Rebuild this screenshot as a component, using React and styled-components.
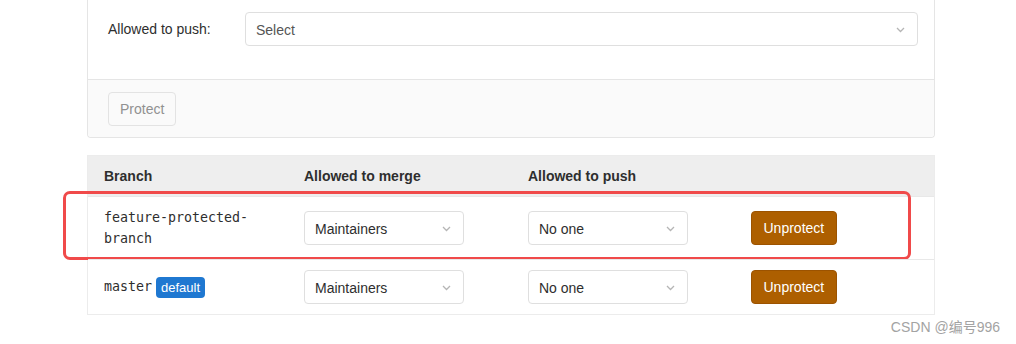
import React from "react";
import styled, { createGlobalStyle } from "styled-components";

const GlobalStyle = createGlobalStyle`
  html, body {
    margin: 0;
    padding: 0;
    background: #ffffff;
  }
  body {
    font-family: "Liberation Sans", Arial, sans-serif;
    font-size: 14px;
    color: #2e2e2e;
  }
`;

const ROWS = [
  { branch: "feature-protected-\nbranch", merge: "Maintainers", push: "No one", highlighted: true },
  { branch: "master", isDefault: true, merge: "Maintainers", push: "No one" },
];

const Page = styled.div`
  position: relative;
  box-sizing: border-box;
  width: 1016px;
  height: 344px;
  padding: 0 81px 0 87px;
  overflow: hidden;
`;

const Card = styled.div`
  border: 1px solid #e5e5e5;
  border-top: none;
  border-radius: 0 0 4px 4px;
`;

const FormRow = styled.div`
  display: flex;
  align-items: center;
  padding: 12px 16px 33px 20px;
`;

const Label = styled.label`
  width: 137px;
  flex-shrink: 0;
  font-size: 14px;
  color: #2e2e2e;
`;

const Footer = styled.div`
  border-top: 1px solid #e5e5e5;
  background: #fafafa;
  padding: 12px 20px 11px;
  border-radius: 0 0 4px 4px;
`;

const Button = styled.button`
  display: block;
  height: 34px;
  padding: 0 ${(p) => (p.$warning ? "11.5px" : "11px")};
  font-family: inherit;
  font-size: 14px;
  border-radius: 4px;
  cursor: pointer;
  border: 1px solid ${(p) => (p.$warning ? "#9c5300" : "#e3e3e3")};
  background: ${(p) => (p.$warning ? "#ad5f00" : "#fafafa")};
  color: ${(p) => (p.$warning ? "#ffffff" : "#919191")};
`;

const SelectBox = styled.div`
  display: flex;
  align-items: center;
  justify-content: space-between;
  box-sizing: border-box;
  height: 34px;
  width: ${(p) => p.$width || "100%"};
  padding: 1px 12px 0 10px;
  border: 1px solid #dfdfdf;
  border-radius: 4px;
  background: #ffffff;
  font-size: 14px;
  color: ${(p) => (p.$placeholder ? "#555555" : "#2e2e2e")};
`;

const Chevron = () => (
  <svg width="9" height="6" viewBox="0 0 9 6" fill="none">
    <path d="M1 1l3.5 3.5L8 1" stroke="#b5b5b5" strokeWidth="1.3" />
  </svg>
);

function Select({ value, width, placeholder }) {
  return (
    <SelectBox $width={width} $placeholder={placeholder}>
      <span>{value}</span>
      <Chevron />
    </SelectBox>
  );
}

const Table = styled.div`
  margin-top: 17px;
  border: 1px solid #ececec;
  border-top: none;
`;

const Row = styled.div`
  position: relative;
  display: grid;
  grid-template-columns: 200px 224px 223px 1fr;
  align-items: center;
  border-top: 1px solid ${(p) => (p.$head ? "#ececec" : "#e8e8e8")};
  background: ${(p) => (p.$head ? "#eeeeee" : "#ffffff")};
  min-height: ${(p) => (p.$head ? "40px" : "auto")};
`;

const Cell = styled.div`
  padding: 10px 16px;
`;

const HeadCell = styled.div`
  padding: 0 16px;
  font-weight: bold;
  font-size: 14px;
  color: #2e2e2e;
`;

const BranchName = styled.code`
  font-family: "DejaVu Sans Mono", "Liberation Mono", monospace;
  font-size: 13.3px;
  line-height: 21px;
  white-space: pre-line;
  color: #2e2e2e;
`;

const Badge = styled.span`
  display: inline-block;
  margin-left: 4px;
  padding: 0 5px;
  height: 21px;
  line-height: 21px;
  border-radius: 4px;
  background: #1f78d1;
  color: #ffffff;
  font-size: 13px;
  vertical-align: middle;
`;

const Highlight = styled.div`
  position: absolute;
  left: -25px;
  right: 23px;
  top: -6px;
  bottom: -1px;
  border: 3px solid #f04a4a;
  border-radius: 7px;
  pointer-events: none;
`;

const Watermark = styled.div`
  position: absolute;
  right: 16px;
  bottom: 8px;
  font-family: "Liberation Sans", "Noto Sans CJK SC", sans-serif;
  font-size: 14px;
  color: #a3a3a3;
`;

export default function App() {
  return (
    <>
      <GlobalStyle />
      <Page>
        <Card>
          <FormRow>
            <Label>Allowed to push:</Label>
            <Select value="Select" placeholder />
          </FormRow>
          <Footer>
            <Button>Protect</Button>
          </Footer>
        </Card>

        <Table>
          <Row $head>
            <HeadCell>Branch</HeadCell>
            <HeadCell>Allowed to merge</HeadCell>
            <HeadCell>Allowed to push</HeadCell>
            <HeadCell />
          </Row>
          {ROWS.map((row) => (
            <Row key={row.branch}>
              <Cell>
                <BranchName>{row.branch}</BranchName>
                {row.isDefault && <Badge>default</Badge>}
              </Cell>
              <Cell>
                <Select value={row.merge} width="160px" />
              </Cell>
              <Cell>
                <Select value={row.push} width="160px" />
              </Cell>
              <Cell>
                <Button $warning>Unprotect</Button>
              </Cell>
              {row.highlighted && <Highlight />}
            </Row>
          ))}
        </Table>
        <Watermark>CSDN @编号996</Watermark>
      </Page>
    </>
  );
}
